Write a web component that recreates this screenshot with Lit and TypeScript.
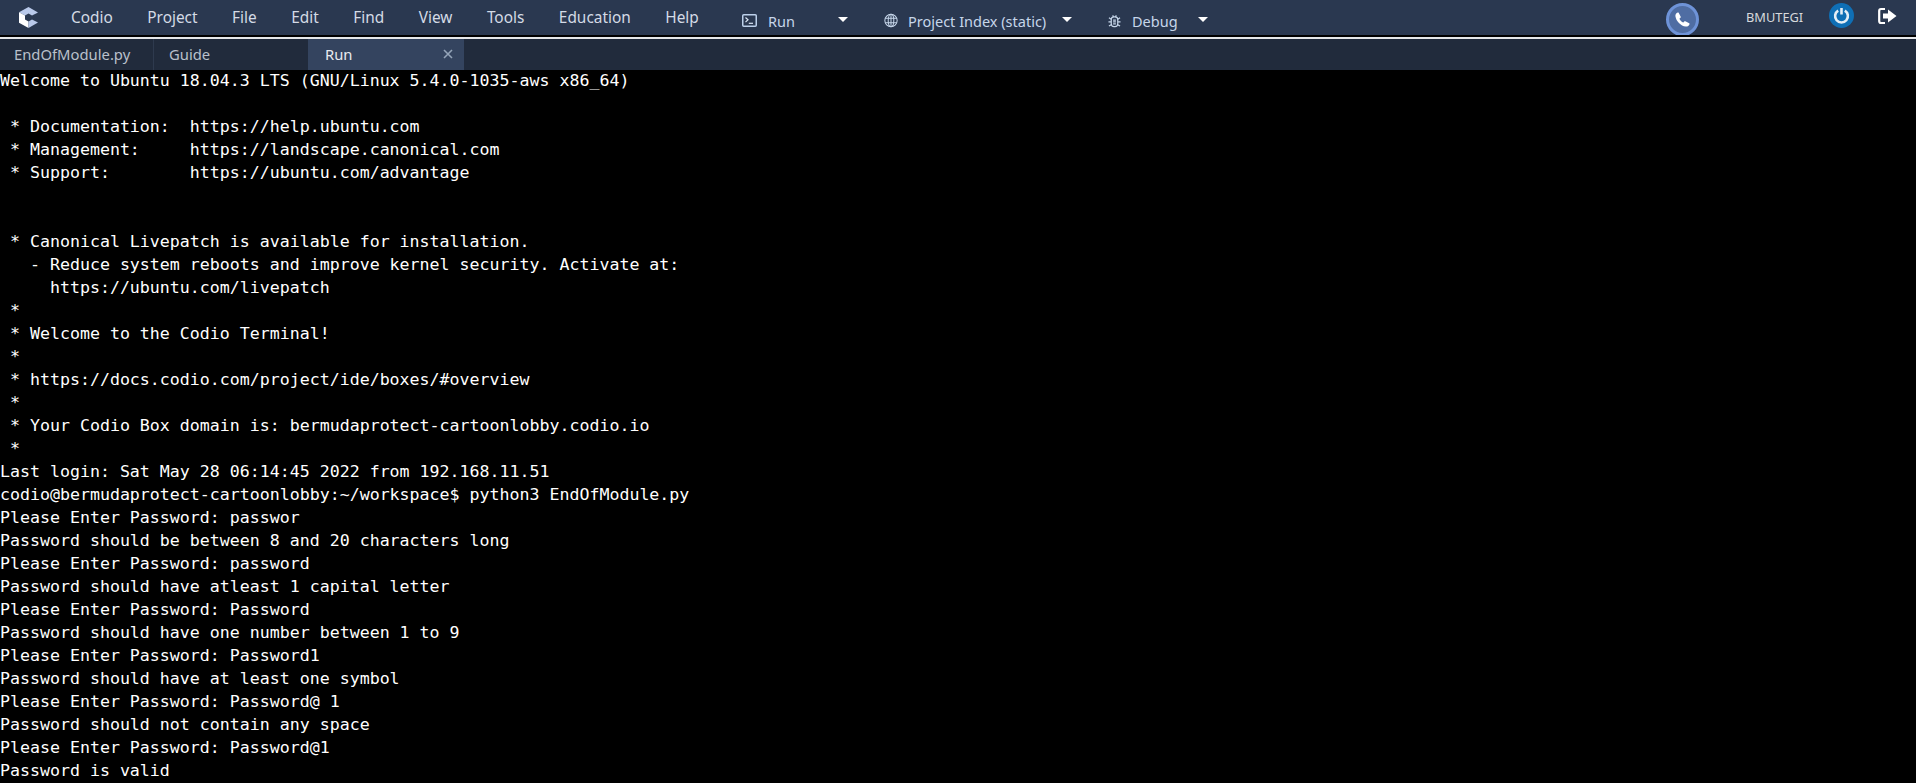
import { LitElement, html, css } from "lit";
import { customElement } from "lit/decorators.js";

const LINES = [
"Welcome to Ubuntu 18.04.3 LTS (GNU/Linux 5.4.0-1035-aws x86_64)",
"",
" * Documentation:  https://help.ubuntu.com",
" * Management:     https://landscape.canonical.com",
" * Support:        https://ubuntu.com/advantage",
"",
"",
" * Canonical Livepatch is available for installation.",
"   - Reduce system reboots and improve kernel security. Activate at:",
"     https://ubuntu.com/livepatch",
" *",
" * Welcome to the Codio Terminal!",
" *",
" * https://docs.codio.com/project/ide/boxes/#overview",
" *",
" * Your Codio Box domain is: bermudaprotect-cartoonlobby.codio.io",
" *",
"Last login: Sat May 28 06:14:45 2022 from 192.168.11.51",
"codio@bermudaprotect-cartoonlobby:~/workspace$ python3 EndOfModule.py",
"Please Enter Password: passwor",
"Password should be between 8 and 20 characters long",
"Please Enter Password: password",
"Password should have atleast 1 capital letter",
"Please Enter Password: Password",
"Password should have one number between 1 to 9",
"Please Enter Password: Password1",
"Password should have at least one symbol",
"Please Enter Password: Password@ 1",
"Password should not contain any space",
"Please Enter Password: Password@1",
"Password is valid",
];

const NAV = ["Codio", "Project", "File", "Edit", "Find", "View", "Tools", "Education", "Help"];

@customElement("app-root")
export class AppRoot extends LitElement {
  static styles = css`
    :host { display: flex; flex-direction: column; width: 1916px; height: 783px; overflow: hidden; background: #000; font-family: "Noto Sans", "Open Sans", sans-serif; }
    .top { height: 35px; flex: none; background: #2a3850; display: flex; align-items: center; color: #d4dbe6; font-size: 15.4px; }
    .rule-a { height: 2px; background: #000; flex: none; }
    .rule-b { height: 2px; background: #e6e8ea; flex: none; }
    .logo { width: 19px; height: 21px; margin-left: 19px; margin-right: 33px; flex: none; }
    .nav { display: flex; gap: 34.5px; width: 671px; flex: none; }
    .nav span { white-space: nowrap; }
    .tool { display: flex; align-items: center; color: #c6d6ea; font-size: 14.5px; flex: none; box-sizing: border-box; padding-top: 6px; white-space: nowrap; }
    .tool svg { flex: none; }
    .caret { width: 0; height: 0; border-left: 5px solid transparent; border-right: 5px solid transparent; border-top: 5px solid #fff; flex: none; margin-top: -2px; }
    .run { width: 142px; }
    .run .l { margin-left: 11px; width: 70px; }
    .pi { width: 224px; }
    .pi .l { margin-left: 10px; width: 154px; }
    .dbg { width: 100px; }
    .dbg .l { margin-left: 11px; width: 70px; }
    .spacer { flex: 1; }
    .phone { width: 33px; height: 33px; border-radius: 50%; background: #4f6da3; border: 3px solid #6e93d8; box-sizing: border-box; display: flex; align-items: center; justify-content: center; margin: 3px 47px 0 0; flex: none; }
    .user { font-size: 12.8px; color: #d7d9dc; width: 83px; flex: none; margin-bottom: 1px; }
    .power { width: 25px; height: 25px; border-radius: 50%; background: #0f6fb5; display: flex; align-items: center; justify-content: center; margin: 0 24px 4px 0; flex: none; }
    .logout { margin: 0 19px 4px 0; flex: none; display: flex; }
    .tabs { height: 31px; flex: none; background: #212b3c; display: flex; font-size: 14.8px; color: #b9c0cb; }
    .tab { display: flex; align-items: center; box-sizing: border-box; flex: none; padding-bottom: 2px; }
    .t1 { width: 154px; padding-left: 14px; border-right: 1px solid #2e3a4e; }
    .t2 { width: 154px; padding-left: 15px; }
    .t3 { width: 156px; padding-left: 17px; padding-right: 11px; background: #34445f; color: #e8ebef; justify-content: space-between; }
    .term { margin: -1px 0 0; flex: 1; color: #fff; font-family: "DejaVu Sans Mono", monospace; font-size: 16.6px; line-height: 23px; white-space: pre; overflow: hidden; }
  `;

  render() {
    return html`
      <div class="top">
        <svg class="logo" viewBox="0 0 19 21">
          <path d="M9.5 0 L19 5.4 L13 8.6 L9.5 6.6 L6 8.6 L0 5.2 Z" fill="#b9c9ea"/>
          <path d="M0 5.2 L6 8.6 L6 12.4 L9.5 14.4 L9.5 21 L0 15.8 Z" fill="#fff"/>
          <path d="M9.5 14.4 L13 12.4 L19 15.6 L9.5 21 Z" fill="#b9c9ea"/>
        </svg>
        <div class="nav">${NAV.map((t) => html`<span>${t}</span>`)}</div>
        <div class="tool run">
          <svg width="15" height="13" viewBox="0 0 15 13"><rect x=".75" y=".75" width="13.5" height="11.5" rx="1" fill="#2a3850" stroke="#bcd0ea" stroke-width="1.5"/><path d="M3.5 3.5 L6 5.8 L3.5 8.1" fill="none" stroke="#dbe6f5" stroke-width="1.2"/><path d="M6.8 9.3 H11" stroke="#dbe6f5" stroke-width="1.2"/></svg>
          <span class="l">Run</span><span class="caret"></span>
        </div>
        <div class="tool pi">
          <svg width="14" height="15" viewBox="0 0 15 15" fill="none" stroke="#c6d6ea" stroke-width="1.1"><circle cx="7.5" cy="7.5" r="6.6"/><ellipse cx="7.5" cy="7.5" rx="3" ry="6.6"/><path d="M1.2 5.2H13.8M1.2 9.8H13.8M7.5 1V14"/></svg>
          <span class="l">Project Index (static)</span><span class="caret"></span>
        </div>
        <div class="tool dbg">
          <svg width="13" height="14" viewBox="0 0 14 15" fill="none" stroke="#c6d6ea" stroke-width="1.3"><rect x="3.5" y="3" width="7" height="10.5" rx="3"/><path d="M5.5 6.5H8.5M5.5 8.5H8.5M5.5 10.5H8.5M1 4L3.5 5.5M13 4L10.5 5.5M.5 8.5H3.5M13.5 8.5H10.5M1 13L3.5 11.5M13 13L10.5 11.5M5 1.5L6 3M9 1.5L8 3"/></svg>
          <span class="l">Debug</span><span class="caret"></span>
        </div>
        <div class="spacer"></div>
        <div class="phone"><svg width="17" height="17" viewBox="0 0 24 24"><path fill="#fff" d="M6.6 2.5 L9.5 8 C9.8 8.6 9.6 9.2 9.1 9.6 L7.6 10.8 C8.8 13.4 10.6 15.2 13.2 16.4 L14.4 14.9 C14.8 14.4 15.4 14.2 16 14.5 L21.5 17.4 C22 17.7 22.1 18.2 21.9 18.7 C21 21 19 22.3 16.6 22 C9.5 21 3 14.5 2 7.4 C1.7 5 3 3 5.3 2.1 C5.8 1.9 6.3 2 6.6 2.5 Z"/></svg></div>
        <div class="user">BMUTEGI</div>
        <div class="power"><svg width="17" height="17" viewBox="0 0 17 17" fill="none" stroke="#e4eef6" stroke-width="2.6"><path d="M5.2 3.6 A6.4 6.4 0 1 0 11.8 3.6"/><path d="M8.5 1 V7.5"/></svg></div>
        <div class="logout"><svg width="19" height="18" viewBox="0 0 19 18"><path d="M7 2 H3 Q1.2 2 1.2 4 V14 Q1.2 16 3 16 H7" fill="none" stroke="#fff" stroke-width="2.2"/><path d="M10 2.5 L18.5 9 L10 15.5 V11.5 H5 V6.5 H10 Z" fill="#fff"/></svg></div>
      </div>
      <div class="rule-a"></div>
      <div class="rule-b"></div>
      <div class="tabs">
        <div class="tab t1">EndOfModule.py</div>
        <div class="tab t2">Guide</div>
        <div class="tab t3"><span>Run</span><svg width="10" height="10" viewBox="0 0 10 10"><path d="M1 1 L9 9 M9 1 L1 9" stroke="#94a4b8" stroke-width="1.6"/></svg></div>
      </div>
      <pre class="term">${LINES.join("\n")}</pre>
    `;
  }
}
